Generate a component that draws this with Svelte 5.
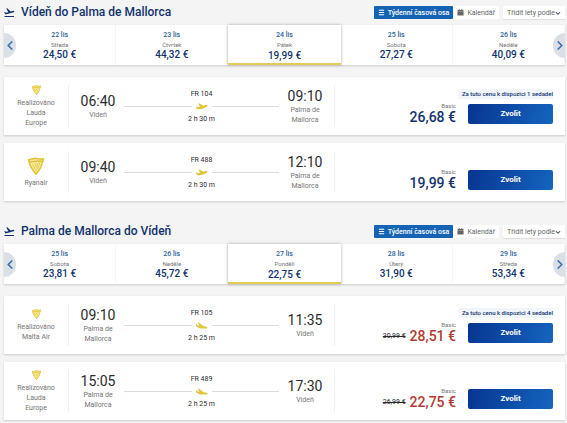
<script lang="ts">
	type Day = { date: string; day: string; price: string };
	type Flight = {
		carrier: string;
		operated: boolean;
		from: string;
		to: string;
		departs: string;
		arrives: string;
		number: string;
		duration: string;
		price: string;
		oldPrice?: string;
		notice?: string;
	};
	type Trip = { id: string; title: string; inbound: boolean; days: Day[]; flights: Flight[] };

	const trips: Trip[] = [
		{
			id: 'outbound',
			title: 'Vídeň do Palma de Mallorca',
			inbound: false,
			days: [
				{ date: '22 lis', day: 'Středa', price: '24,50 €' },
				{ date: '23 lis', day: 'Čtvrtek', price: '44,32 €' },
				{ date: '24 lis', day: 'Pátek', price: '19,99 €' },
				{ date: '25 lis', day: 'Sobota', price: '27,27 €' },
				{ date: '26 lis', day: 'Neděle', price: '40,09 €' }
			],
			flights: [
				{
					carrier: 'Lauda Europe',
					operated: true,
					from: 'Vídeň',
					to: 'Palma de Mallorca',
					departs: '06:40',
					arrives: '09:10',
					number: 'FR 104',
					duration: '2 h 30 m',
					price: '26,68 €',
					notice: 'Za tuto cenu k dispozici 1 sedadel'
				},
				{
					carrier: 'Ryanair',
					operated: false,
					from: 'Vídeň',
					to: 'Palma de Mallorca',
					departs: '09:40',
					arrives: '12:10',
					number: 'FR 488',
					duration: '2 h 30 m',
					price: '19,99 €'
				}
			]
		},
		{
			id: 'inbound',
			title: 'Palma de Mallorca do Vídeň',
			inbound: true,
			days: [
				{ date: '25 lis', day: 'Sobota', price: '23,81 €' },
				{ date: '26 lis', day: 'Neděle', price: '45,72 €' },
				{ date: '27 lis', day: 'Pondělí', price: '22,75 €' },
				{ date: '28 lis', day: 'Úterý', price: '31,90 €' },
				{ date: '29 lis', day: 'Středa', price: '53,34 €' }
			],
			flights: [
				{
					carrier: 'Malta Air',
					operated: true,
					from: 'Palma de Mallorca',
					to: 'Vídeň',
					departs: '09:10',
					arrives: '11:35',
					number: 'FR 105',
					duration: '2 h 25 m',
					price: '28,51 €',
					oldPrice: '30,99 €',
					notice: 'Za tuto cenu k dispozici 4 sedadel'
				},
				{
					carrier: 'Lauda Europe',
					operated: true,
					from: 'Palma de Mallorca',
					to: 'Vídeň',
					departs: '15:05',
					arrives: '17:30',
					number: 'FR 489',
					duration: '2 h 25 m',
					price: '22,75 €',
					oldPrice: '26,99 €'
				}
			]
		}
	];

	// Selected day index per trip
	let selected = $state([2, 2]);

	function step(trip: number, by: number) {
		selected[trip] = Math.min(4, Math.max(0, selected[trip] + by));
	}
</script>

{#snippet chevron(d: string)}
	<svg class="chevron" viewBox="0 0 10 10" aria-hidden="true">
		<path {d} fill="none" stroke="currentColor" stroke-width="1.7" />
	</svg>
{/snippet}

{#snippet place(time: string, city: string)}
	<div class="place">
		<span class="time">{time}</span>
		<span class="city">{city}</span>
	</div>
{/snippet}

<main>
	{#each trips as trip, t}
		<section>
			<header>
				<svg class="takeoff" viewBox="2 3 21 18" aria-hidden="true">
					<path d="M2.5 19h19v2h-19z" />
					<path d="M22.07 9.64c-.21-.8-1.04-1.28-1.84-1.06L14.92 10l-6.9-6.43-1.93.51 4.14 7.17-4.97 1.33-1.97-1.54-1.45.39 2.59 4.49L21 11.49c.81-.23 1.28-1.05 1.07-1.85z" />
				</svg>
				<h2>{trip.title}</h2>
				<button class="view current" type="button">
					<svg viewBox="0 0 8 8" aria-hidden="true">
						<path d="M1 1.5h6M1 4h6M1 6.5h6" stroke="currentColor" stroke-width="1.2" />
					</svg>
					Týdenní časová osa
				</button>
				<button class="view" type="button">
					<svg viewBox="0 0 8 8" aria-hidden="true">
						<path d="M1 1h1V0h1v1h2V0h1v1h1l.5.5V3h-7V1.5zM.5 3.5h7v4h-7z" fill="currentColor" />
					</svg>
					Kalendář
				</button>
				<div class="sort">
					<select id="sort-{trip.id}" aria-label="Třídit lety podle">
						<option>Třídit lety podle</option>
					</select>
					{@render chevron('M1.5 3.5 5 7l3.5-3.5')}
				</div>
			</header>

			<div class="days">
				{#each trip.days as day, i}
					<button class="day" class:active={selected[t] === i} type="button" onclick={() => (selected[t] = i)}>
						<span class="date">{day.date}</span>
						<span class="weekday">{day.day}</span>
						<span class="fare">{day.price}</span>
					</button>
				{/each}
				<button class="arrow prev" type="button" aria-label="Předchozí" onclick={() => step(t, -1)}>
					{@render chevron('M7 .5 2.5 5 7 9.5')}
				</button>
				<button class="arrow next" type="button" aria-label="Další" onclick={() => step(t, 1)}>
					{@render chevron('M3 .5 7.5 5 3 9.5')}
				</button>
			</div>

			<div class="flights">
				{#each trip.flights as flight}
					<article>
						<div class="carrier">
							<svg class="harp" class:large={!flight.operated} viewBox="0 0 20 20" aria-hidden="true">
								<path d="M1 3.5C4 4 6 1.500 9 1.500c3 0 5 1.500 10 .5-1 3-2 4-2.500 6-.8 4-3 8-6.500 11.500C8 16 4.500 13 3 9.500 2.300 7.500 2 5 1 3.500z" fill="#f5eba0" />
								<path d="M1 3c3 .5 5-1.500 8-1.500 3 0 5 1.500 10 .5M2 4c1 6 3 9 8 15 3.500-4 6-7.500 6.500-11.500L18.500 2.500M3.500 5.500C8 5.500 11 3.500 17 5" fill="none" stroke="#e0c43a" stroke-width="1.8" />
								<path d="M6 8l4.500 7.500M8.500 7l3.500 6.500M11 6.500l2 5M13.500 6l.8 3" fill="none" stroke="#e0c43a" stroke-width="1" />
							</svg>
							<span>{flight.operated ? 'Realizováno ' : ''}{flight.carrier}</span>
						</div>

						<div class="journey">
							{@render place(flight.departs, flight.from)}
							<div class="route">
								<span>{flight.number}</span>
								<div class="track">
									<svg viewBox="2 3 21 13" aria-hidden="true">
										{#if trip.inbound}
											<path d="M20.500 15.800c.9 0 1.500-.6 1.500-1.400 0-.9-.6-1.500-1.500-1.700l-5-1L7 5.500l-2.400-.3 3.600 5.400-3.400-.6L3 8l-1-.1.500 4.300c3 1.800 7 3.600 10 3.600z" />
										{:else}
											<path d="M22.07 8.500c-.3-.9-1.100-1.300-2-1L14.500 9 8.500 5l-2.600.7 3.600 4.900-4.300 1.100-2-1.200-1.600.4 2.900 4.500c6 0 12-2 16.500-4.800.9-.5 1.300-1.200 1.070-2.100z" />
										{/if}
									</svg>
								</div>
								<span>{flight.duration}</span>
							</div>
							{@render place(flight.arrives, flight.to)}
						</div>

						<div class="booking">
							<span class="notice">{flight.notice ?? ''}</span>
							<div class="offer">
								<div class="cost">
									<span class="tier">Basic</span>
									<div class="amount">
										{#if flight.oldPrice}<del>{flight.oldPrice}</del>{/if}
										<strong class:discounted={flight.oldPrice}>{flight.price}</strong>
									</div>
								</div>
								<button class="choose" type="button">Zvolit</button>
							</div>
						</div>
					</article>
				{/each}
			</div>
		</section>
	{/each}
</main>

<style>
	:global(body) {
		background: #f4f4f4;
	}

	main {
		--navy: #12326e;
		--blue: #1563b5;
		--grey: #757575;
		display: flex;
		flex-direction: column;
		gap: 18px;
		padding: 0 2px 3px 4px;
		font-family: Roboto, 'Liberation Sans', sans-serif;
		font-size: 7px;
		line-height: 10px;
		color: #2b2b2b;
	}

	button,
	select {
		margin: 0;
		padding: 0;
		border: 0;
		background: none;
		font: inherit;
		color: inherit;
		cursor: pointer;
	}

	header {
		display: flex;
		align-items: center;
		height: 25px;
	}

	.takeoff {
		width: 11px;
		height: 9px;
		margin-right: 6px;
		fill: var(--navy);
	}

	h2 {
		flex: 1;
		margin: 0;
		padding-bottom: 2px;
		font-size: 12px;
		line-height: 16px;
		font-weight: 500;
		color: var(--navy);
	}

	.view {
		display: flex;
		align-items: center;
		gap: 3px;
		height: 13px;
		margin-right: 4px;
		padding: 0 4px;
		border-radius: 1px;
		background: #fff;
		color: #666;
	}

	.view.current {
		margin-right: 0;
		background: var(--blue);
		font-weight: 500;
		color: #fff;
	}

	.view svg {
		width: 7px;
		height: 7px;
	}

	.sort {
		display: flex;
		align-items: center;
		height: 13px;
		padding: 0 4px;
		border-radius: 1px;
		background: #fff;
		box-shadow: 0 1px 1px #ddd;
		color: #666;
	}

	.sort select {
		appearance: none;
	}

	.sort .chevron {
		width: 6px;
		height: 6px;
	}

	.days {
		position: relative;
		display: grid;
		grid-template-columns: repeat(5, 1fr);
		height: 40px;
		background: #fff;
		box-shadow: 0 1px 2px #ccc;
	}

	.day {
		display: flex;
		flex-direction: column;
		align-items: center;
		padding-top: 5px;
		border-right: 1px solid #f5f5f5;
	}

	.day.active {
		border-right: 0;
		border-bottom: 2px solid #e2cc55;
		background: #fff;
		box-shadow: 0 0 3px #aaa;
	}

	.date {
		font-weight: 500;
		color: #2e6299;
	}

	.weekday {
		font-size: 6px;
		line-height: 9px;
		color: var(--grey);
	}

	.fare {
		font-size: 10px;
		line-height: 12px;
		font-weight: 500;
		color: var(--navy);
	}

	.active .fare {
		line-height: 14px;
	}

	.arrow {
		position: absolute;
		top: 8px;
		display: grid;
		place-items: center;
		width: 12px;
		height: 25px;
		background: #dbe0e6;
		color: #3a6ea5;
	}

	.arrow .chevron {
		width: 9px;
		height: 9px;
	}

	.prev {
		left: 0;
		border-radius: 0 12px 12px 0;
	}

	.next {
		right: 0;
		border-radius: 12px 0 0 12px;
	}

	.flights {
		display: flex;
		flex-direction: column;
		gap: 8px;
		margin-top: 12px;
	}

	article {
		display: grid;
		grid-template-columns: 64px 1fr 230px;
		height: 58px;
		background: #fff;
		box-shadow: 0 1px 2px #ccc;
	}

	.carrier {
		display: flex;
		flex-direction: column;
		align-items: center;
		justify-content: center;
		gap: 3px;
		padding: 0 12px;
		text-align: center;
		color: var(--grey);
	}

	.harp {
		width: 11px;
		height: 10px;
	}

	.harp.large {
		width: 18px;
		height: 18px;
	}

	.journey {
		display: grid;
		grid-template-columns: 52px 1fr 52px;
		align-items: center;
		margin: 8px 0;
		padding: 0 3px;
		border: solid #f0f0f0;
		border-width: 0 1px;
	}

	.place {
		display: flex;
		flex-direction: column;
		align-items: center;
		text-align: center;
	}

	.time {
		font-size: 14px;
		line-height: 17px;
	}

	.city {
		width: 32px;
		color: var(--grey);
	}

	.route {
		display: flex;
		flex-direction: column;
		align-items: center;
		gap: 2px;
	}

	.track {
		display: flex;
		align-items: center;
		gap: 4px;
		width: 100%;
		height: 11px;
	}

	.track::before,
	.track::after {
		content: '';
		flex: 1;
		height: 1px;
		background: #dcdcdc;
	}

	.track svg {
		width: 12px;
		height: 8px;
		fill: #e0c43a;
	}

	.booking {
		display: flex;
		flex-direction: column;
		align-items: flex-end;
		padding: 12px 12px 0 0;
	}

	.notice {
		height: 10px;
		margin-bottom: 5px;
		padding-left: 4px;
		background: #f1f6fb;
		font-size: 6px;
		font-weight: 500;
		color: var(--navy);
	}

	.notice:empty {
		padding: 0;
	}

	.offer {
		display: flex;
		align-items: flex-start;
		gap: 12px;
	}

	.cost {
		display: flex;
		flex-direction: column;
		align-items: flex-end;
	}

	.tier {
		font-size: 6px;
		line-height: 4px;
		color: var(--grey);
	}

	.amount {
		display: flex;
		align-items: center;
		gap: 4px;
	}

	strong {
		font-size: 14px;
		line-height: 18px;
		font-weight: 500;
		color: var(--navy);
	}

	.discounted {
		color: #b23a32;
	}

	.choose {
		width: 85px;
		height: 20px;
		border-radius: 2px;
		background: linear-gradient(110deg, #073590, #1565c0);
		font-size: 8px;
		font-weight: 700;
		color: #fff;
	}
</style>
